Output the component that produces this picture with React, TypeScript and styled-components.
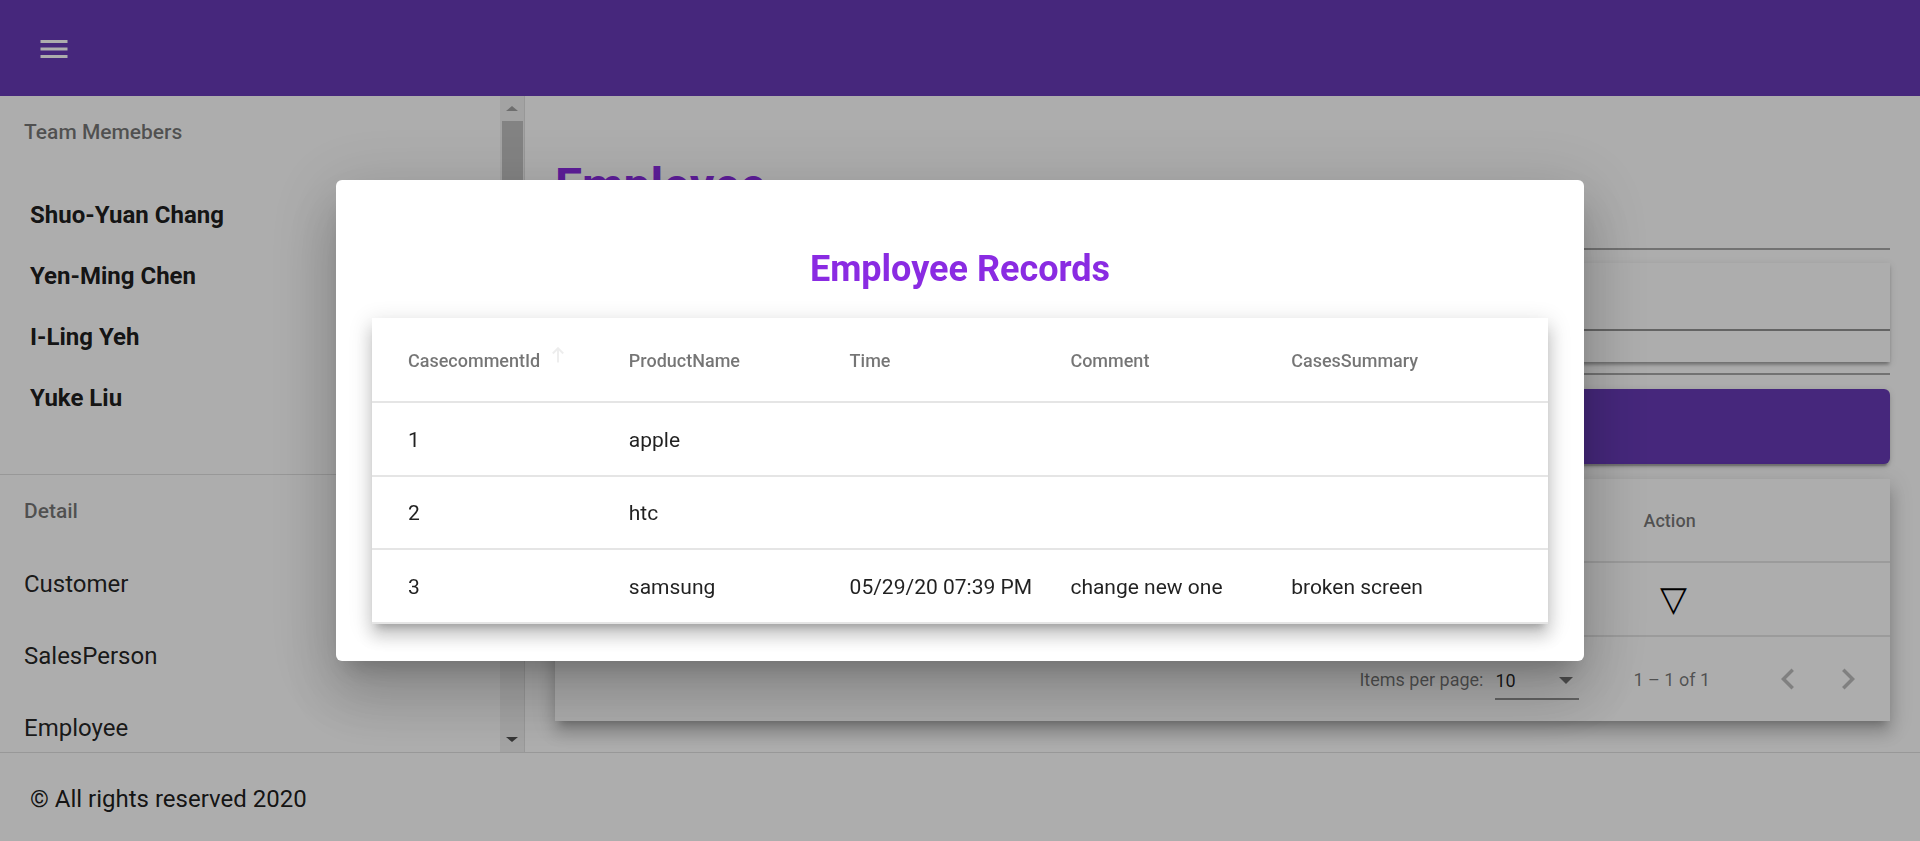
import styled, { createGlobalStyle } from "styled-components";

const GlobalStyle = createGlobalStyle`
  html, body {
    margin: 0;
    padding: 0;
    height: 100%;
  }
  body {
    font-family: Roboto, "Helvetica Neue", "Liberation Sans", sans-serif;
    background: #fff;
    overflow: hidden;
  }
  * {
    box-sizing: border-box;
  }
`;

const Page = styled.div`
  height: 100vh;
  display: flex;
  flex-direction: column;
`;

const Toolbar = styled.header`
  height: 96px;
  flex: none;
  background: #673ab7;
  color: #fff;
  display: flex;
  align-items: center;
  padding: 1px 24px 0;
`;

const IconButton = styled.button<{ $size?: number }>`
  width: ${(p) => p.$size ?? 60}px;
  height: ${(p) => p.$size ?? 60}px;
  border: none;
  padding: 0;
  background: transparent;
  color: inherit;
  display: flex;
  align-items: center;
  justify-content: center;
  flex: none;
`;

const Body = styled.div`
  flex: 1;
  display: flex;
  min-height: 0;
`;

const Sidebar = styled.nav`
  width: 525px;
  flex: none;
  display: flex;
  overflow: hidden;
  border-right: 1px solid rgba(0, 0, 0, 0.12);
`;

const SidebarContent = styled.div`
  flex: 1;
  min-width: 0;
  overflow: hidden;
`;

/* classic scrollbar at the sidebar's right edge */
const ScrollBar = styled.div`
  width: 24px;
  flex: none;
  display: flex;
  flex-direction: column;
  background: #f1f1f1;
`;

const ScrollButton = styled.div<{ $dir: "up" | "down"; $active?: boolean }>`
  height: 24px;
  flex: none;
  display: flex;
  justify-content: center;
  align-items: ${(p) => (p.$dir === "up" ? "flex-start" : "flex-end")};
  padding: ${(p) => (p.$dir === "up" ? "10px 0 0" : "0 0 10px")};

  &::after {
    content: "";
    width: 0;
    height: 0;
    border-left: 6px solid transparent;
    border-right: 6px solid transparent;
    ${(p) =>
      p.$dir === "up"
        ? `border-bottom: 5px solid ${p.$active ? "#505050" : "#a3a3a3"};`
        : `border-top: 5px solid ${p.$active ? "#505050" : "#a3a3a3"};`}
  }
`;

const ScrollTrack = styled.div`
  flex: 1;
  padding: 1px 1px 0 2px;
`;

const ScrollThumb = styled.div`
  height: 492px;
  background: #c1c1c1;
`;

const Subheader = styled.div`
  height: 72px;
  padding: 0 24px;
  display: flex;
  align-items: center;
  font-size: 21px;
  font-weight: 500;
  color: rgba(0, 0, 0, 0.54);
`;

const MemberList = styled.ul`
  list-style: none;
  margin: 0;
  padding: 16px 0 46px;
  border-bottom: 1px solid rgba(0, 0, 0, 0.12);
`;

const Member = styled.li`
  height: 61px;
  padding-left: 30px;
  display: flex;
  align-items: center;
  font-size: 24px;
  font-weight: 700;
  color: rgba(0, 0, 0, 0.9);
`;

const NavList = styled.ul`
  list-style: none;
  margin: 0;
  padding: 0;
`;

const NavItem = styled.li`
  height: 72px;
  padding: 1px 24px 0;
  display: flex;
  align-items: center;
  font-size: 24px;
  color: rgba(0, 0, 0, 0.87);
`;

const Main = styled.main`
  flex: 1;
  min-width: 0;
  padding: 30px;
  overflow: hidden;
  display: flex;
  flex-direction: column;
`;

const PageTitle = styled.h1`
  margin: 32px 0 34px;
  font-size: 48px;
  line-height: 56px;
  font-weight: 700;
  color: #8a2be2;
`;

const Rule = styled.hr<{ $gap: number }>`
  margin: ${(p) => p.$gap}px 0 0;
  border: none;
  border-top: 2px solid rgba(0, 0, 0, 0.34);
  flex: none;
`;

const FormCard = styled.div`
  margin-top: 13px;
  height: 99px;
  padding: 30px 0 0 24px;
  background: #fff;
  flex: none;
  box-shadow: 0 4px 3px -2px rgba(0, 0, 0, 0.2), 0 3px 3px 0 rgba(0, 0, 0, 0.14),
    0 2px 8px 0 rgba(0, 0, 0, 0.12);
`;

const Field = styled.input`
  display: block;
  width: 100%;
  height: 38px;
  border: none;
  border-bottom: 2px solid rgba(0, 0, 0, 0.42);
  outline: none;
  font: inherit;
  font-size: 21px;
  padding: 0;
  background: transparent;
  color: rgba(0, 0, 0, 0.87);
`;

const PrimaryButton = styled.button`
  margin-top: 14px;
  height: 75px;
  flex: none;
  border: none;
  border-radius: 6px;
  background: #673ab7;
  color: #fff;
  font-family: inherit;
  font-size: 21px;
  font-weight: 500;
  box-shadow: 0 4.5px 1.5px -3px rgba(0, 0, 0, 0.2), 0 3px 3px 0 rgba(0, 0, 0, 0.14),
    0 1.5px 7.5px 0 rgba(0, 0, 0, 0.12);
`;

const TableCard = styled.div`
  margin-top: 15px;
  background: #fff;
  flex: none;
  box-shadow: 0 7.5px 7.5px -4.5px rgba(0, 0, 0, 0.2), 0 12px 15px 1.5px rgba(0, 0, 0, 0.14),
    0 4.5px 21px 3px rgba(0, 0, 0, 0.12);
`;

const GridRow = styled.div<{ $cols: number; $height: number }>`
  display: grid;
  grid-template-columns: repeat(${(p) => p.$cols}, minmax(0, 1fr));
  align-items: center;
  height: ${(p) => p.$height}px;
  padding: 1px 36px 0;
  border-bottom: 2px solid rgba(0, 0, 0, 0.1);
`;

const HeadCell = styled.div`
  display: flex;
  align-items: center;
  font-size: 18px;
  font-weight: 500;
  color: rgba(0, 0, 0, 0.54);
  white-space: nowrap;
`;

const Cell = styled.div`
  font-size: 21px;
  color: rgba(0, 0, 0, 0.87);
  white-space: nowrap;
  overflow: hidden;
`;

const Glyph = styled.span`
  font-family: "DejaVu Sans", sans-serif;
  font-size: 35px;
  line-height: 1;
  color: #000;
`;

const Paginator = styled.div`
  height: 84px;
  padding: 0 12px;
  display: flex;
  align-items: center;
  justify-content: flex-end;
  font-size: 18px;
  color: rgba(0, 0, 0, 0.54);
`;

const PageSizeLabel = styled.span`
  margin-right: 6px;
`;

const PageSelect = styled.div`
  width: 84px;
  height: 38px;
  margin: 4px 6px 0;
  display: flex;
  align-items: center;
  justify-content: space-between;
  padding-right: 6px;
  border-bottom: 2px solid rgba(0, 0, 0, 0.42);
  color: rgba(0, 0, 0, 0.87);
`;

const SelectArrow = styled.span`
  width: 0;
  height: 0;
  border-left: 7px solid transparent;
  border-right: 7px solid transparent;
  border-top: 7.5px solid rgba(0, 0, 0, 0.54);
`;

const RangeLabel = styled.span`
  margin: 0 48px;
`;

const Footer = styled.footer`
  height: 89px;
  flex: none;
  border-top: 1px solid rgba(0, 0, 0, 0.12);
  padding: 4px 30px 0;
  display: flex;
  align-items: center;
  font-size: 24px;
  color: rgba(0, 0, 0, 0.9);
`;

const Backdrop = styled.div`
  position: fixed;
  inset: 0;
  background: rgba(0, 0, 0, 0.32);
  display: flex;
  align-items: center;
  justify-content: center;
`;

const Dialog = styled.div`
  width: 1248px;
  padding: 36px 36px 37px;
  background: #fff;
  border-radius: 6px;
  box-shadow: 0 16.5px 22.5px -10.5px rgba(0, 0, 0, 0.2), 0 36px 57px 4.5px rgba(0, 0, 0, 0.14),
    0 13.5px 69px 12px rgba(0, 0, 0, 0.12);
`;

const DialogTitle = styled.h2`
  margin: 29px 0 25px;
  font-size: 36px;
  line-height: 48px;
  font-weight: 700;
  text-align: center;
  color: #8a2be2;
`;

const DialogTable = styled.div`
  background: #fff;
  box-shadow: 0 7.5px 7.5px -4.5px rgba(0, 0, 0, 0.2), 0 12px 15px 1.5px rgba(0, 0, 0, 0.14),
    0 4.5px 21px 3px rgba(0, 0, 0, 0.12);
`;

const SortArrow = styled.svg`
  margin-left: 9px;
  margin-top: -10px;
`;

const members = ["Shuo-Yuan Chang", "Yen-Ming Chen", "I-Ling Yeh", "Yuke Liu"];
const navItems = ["Customer", "SalesPerson", "Employee", "Cases", "Products"];

const employeeCols = ["EmployeeId", "FirstName", "LastName", "Email", "Phone", "Action"];

const commentCols = ["CasecommentId", "ProductName", "Time", "Comment", "CasesSummary"];
const comments = [
  { id: 1, product: "apple", time: "", comment: "", summary: "" },
  { id: 2, product: "htc", time: "", comment: "", summary: "" },
  { id: 3, product: "samsung", time: "05/29/20 07:39 PM", comment: "change new one", summary: "broken screen" },
];

function MenuIcon() {
  return (
    <svg width="36" height="36" viewBox="0 0 24 24" fill="currentColor">
      <path d="M3 18h18v-2H3v2zm0-5h18v-2H3v2zm0-7v2h18V6H3z" />
    </svg>
  );
}

function Chevron({ dir }: { dir: "left" | "right" }) {
  return (
    <svg width="42" height="42" viewBox="0 0 24 24" fill="rgba(0,0,0,0.26)">
      {dir === "left" ? (
        <path d="M15.41 7.41L14 6l-6 6 6 6 1.41-1.41L10.83 12z" />
      ) : (
        <path d="M10 6L8.59 7.41 13.17 12l-4.58 4.59L10 18l6-6z" />
      )}
    </svg>
  );
}

export default function App() {
  return (
    <>
      <GlobalStyle />
      <Page>
        <Toolbar>
          <IconButton aria-label="menu">
            <MenuIcon />
          </IconButton>
        </Toolbar>
        <Body>
          <Sidebar>
            <SidebarContent>
              <Subheader>Team Memebers</Subheader>
              <MemberList>
                {members.map((m) => (
                  <Member key={m}>{m}</Member>
                ))}
              </MemberList>
              <Subheader>Detail</Subheader>
              <NavList>
                {navItems.map((n) => (
                  <NavItem key={n}>{n}</NavItem>
                ))}
              </NavList>
            </SidebarContent>
            <ScrollBar>
              <ScrollButton $dir="up" />
              <ScrollTrack>
                <ScrollThumb />
              </ScrollTrack>
              <ScrollButton $dir="down" $active />
            </ScrollBar>
          </Sidebar>
          <Main>
            <PageTitle>Employee</PageTitle>
            <Rule $gap={0} />
            <FormCard>
              <Field placeholder="" />
            </FormCard>
            <Rule $gap={11} />
            <PrimaryButton>Add Employee</PrimaryButton>
            <TableCard>
              <GridRow $cols={6} $height={84}>
                {employeeCols.map((c) => (
                  <HeadCell key={c}>{c}</HeadCell>
                ))}
              </GridRow>
              <GridRow $cols={6} $height={74}>
                <Cell>1</Cell>
                <Cell>Amy</Cell>
                <Cell>Chen</Cell>
                <Cell>amy@mail.com</Cell>
                <Cell>0912345678</Cell>
                <Cell>
                  <IconButton>
                    <Glyph>▽</Glyph>
                  </IconButton>
                </Cell>
              </GridRow>
              <Paginator>
                <PageSizeLabel>Items per page:</PageSizeLabel>
                <PageSelect>
                  <span>10</span>
                  <SelectArrow />
                </PageSelect>
                <RangeLabel>1 – 1 of 1</RangeLabel>
                <IconButton disabled>
                  <Chevron dir="left" />
                </IconButton>
                <IconButton disabled>
                  <Chevron dir="right" />
                </IconButton>
              </Paginator>
            </TableCard>
          </Main>
        </Body>
        <Footer>© All rights reserved 2020</Footer>
      </Page>

      <Backdrop>
        <Dialog>
          <DialogTitle>Employee Records</DialogTitle>
          <DialogTable>
            <GridRow $cols={5} $height={85}>
              {commentCols.map((c, i) => (
                <HeadCell key={c}>
                  {c}
                  {i === 0 && (
                    <SortArrow width="18" height="18" viewBox="0 0 12 12" fill="none" stroke="rgba(0,0,0,0.07)" strokeWidth="1.3">
                      <path d="M6 11V1.5M2.5 5L6 1.5 9.5 5" />
                    </SortArrow>
                  )}
                </HeadCell>
              ))}
            </GridRow>
            {comments.map((r) => (
              <GridRow key={r.id} $cols={5} $height={73.5}>
                <Cell>{r.id}</Cell>
                <Cell>{r.product}</Cell>
                <Cell>{r.time}</Cell>
                <Cell>{r.comment}</Cell>
                <Cell>{r.summary}</Cell>
              </GridRow>
            ))}
          </DialogTable>
        </Dialog>
      </Backdrop>
    </>
  );
}
